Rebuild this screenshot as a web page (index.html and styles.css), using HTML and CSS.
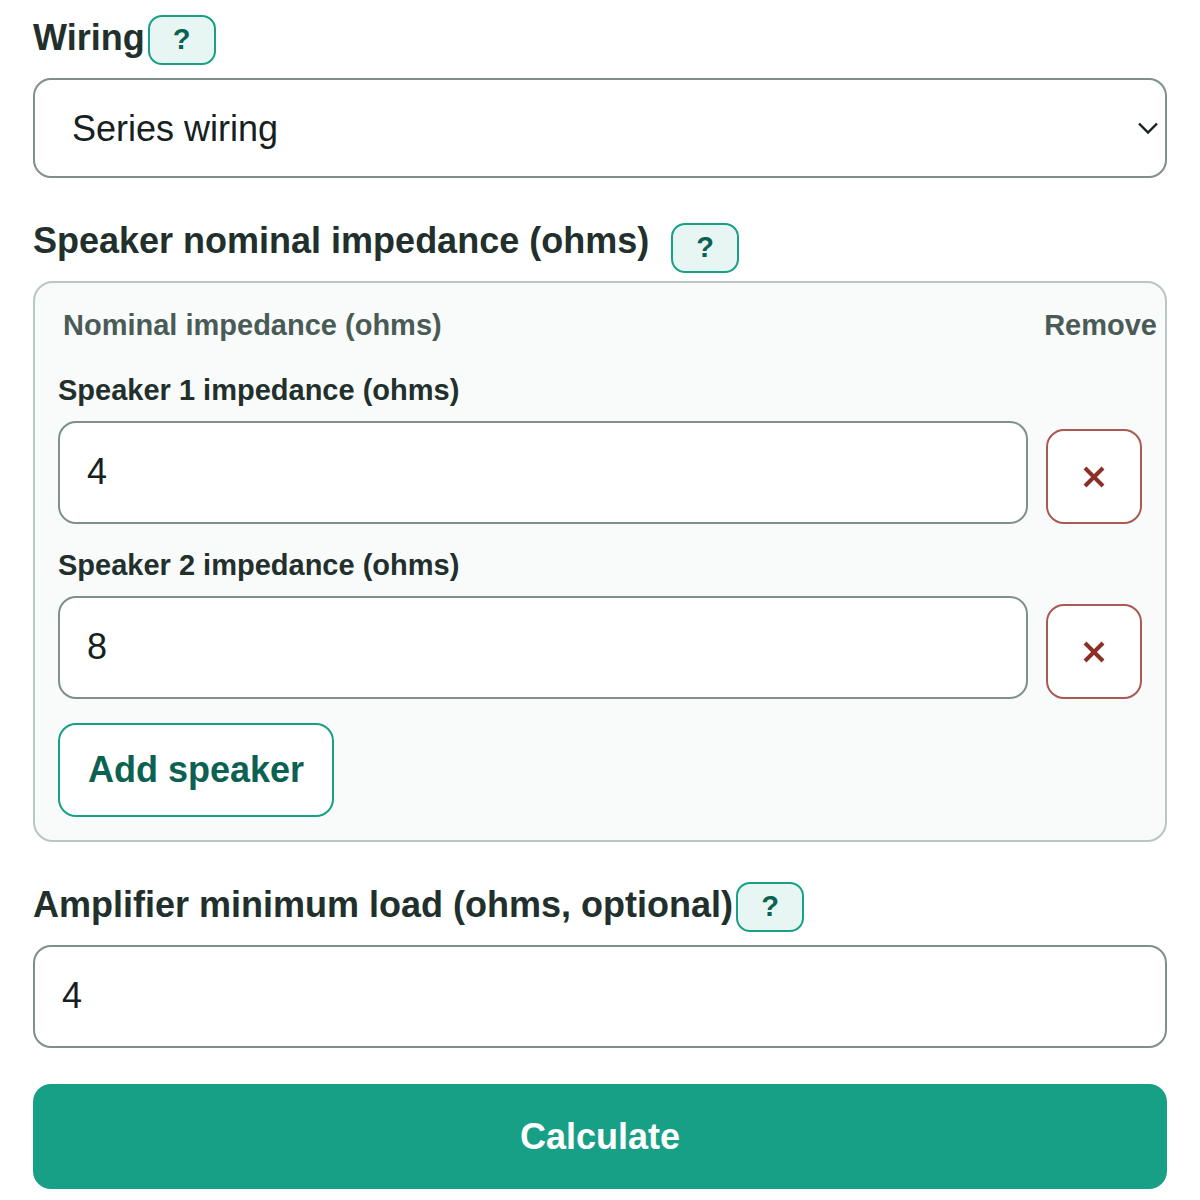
FILE: index.html
```html
<!DOCTYPE html>
<html lang="en">
<head>
  <meta charset="utf-8">
  <meta name="viewport" content="width=device-width, initial-scale=1">
  <title>Speaker impedance calculator</title>
  <link rel="stylesheet" href="styles.css">
</head>
<body>
  <form class="calculator">
    <div class="field">
      <div class="field-head">
        <label class="field-label" for="wiring">Wiring</label>
        <button class="help" type="button" aria-label="Help: wiring">?</button>
      </div>
      <div class="select-wrap">
        <select class="control select" id="wiring">
          <option>Series wiring</option>
          <option>Parallel wiring</option>
        </select>
        <svg class="chevron" viewBox="0 0 22 14" aria-hidden="true"><path d="M2 2.5 11 11.5 20 2.5"/></svg>
      </div>
    </div>

    <div class="field field-group" role="group" aria-labelledby="speakers-title">
      <div class="field-head field-head-spaced">
        <span class="field-label" id="speakers-title">Speaker nominal impedance (ohms)</span>
        <button class="help" type="button" aria-label="Help: speaker impedance">?</button>
      </div>
      <div class="panel">
        <div class="panel-head">
          <span>Nominal impedance (ohms)</span>
          <span>Remove</span>
        </div>
        <div class="speakers">
          <div class="speaker">
            <div class="speaker-field">
              <label class="speaker-label" for="speaker-1">Speaker 1 impedance (ohms)</label>
              <input class="control" id="speaker-1" type="number" value="4">
            </div>
            <button class="remove" type="button" aria-label="Remove speaker 1">
              <svg class="cross" viewBox="0 0 22 22" aria-hidden="true"><path d="M2 2 20 20M20 2 2 20"/></svg>
            </button>
          </div>
          <div class="speaker">
            <div class="speaker-field">
              <label class="speaker-label" for="speaker-2">Speaker 2 impedance (ohms)</label>
              <input class="control" id="speaker-2" type="number" value="8">
            </div>
            <button class="remove" type="button" aria-label="Remove speaker 2">
              <svg class="cross" viewBox="0 0 22 22" aria-hidden="true"><path d="M2 2 20 20M20 2 2 20"/></svg>
            </button>
          </div>
        </div>
        <button class="add" type="button">Add speaker</button>
      </div>
    </div>

    <div class="field">
      <div class="field-head">
        <label class="field-label" for="load">Amplifier minimum load (ohms, optional)</label>
        <button class="help" type="button" aria-label="Help: minimum load">?</button>
      </div>
      <input class="control" id="load" type="number" value="4">
    </div>

    <button class="submit" type="submit">Calculate</button>
  </form>
</body>
</html>
```
FILE: styles.css
```css
* {
  box-sizing: border-box;
}

body {
  margin: 0;
  background: #fff;
  color: #22302d;
  font-family: "Liberation Sans", Arial, sans-serif;
  font-size: 36px;
}

button,
input,
select {
  margin: 0;
  font: inherit;
}

button {
  cursor: pointer;
}

.calculator {
  display: flex;
  flex-direction: column;
  gap: 36px;
  padding: 11px 33px;
}

.field {
  display: flex;
  flex-direction: column;
  gap: 13px;
}

.field-group {
  gap: 8px;
}

.field-head {
  display: flex;
  align-items: flex-start;
  gap: 3px;
  padding-top: 4px;
}

.field-head-spaced {
  gap: 22px;
}

.field-head-spaced .help {
  margin-top: 5px;
}

.field-label {
  line-height: 45px;
  font-weight: 700;
}

.help {
  flex: none;
  width: 68px;
  height: 50px;
  padding: 0 0 2px;
  border: 2px solid #17a086;
  border-radius: 14px;
  background: #e8f6f3;
  color: #0b6152;
  font-size: 29px;
  font-weight: 700;
}

.control {
  width: 100%;
  height: 103px;
  padding: 0 27px 2px;
  border: 2px solid #7f908b;
  border-radius: 18px;
  background: #fff;
  color: #16211f;
  appearance: none;
}

input.control {
  appearance: textfield;
}

.select-wrap {
  position: relative;
}

.select {
  display: block;
  height: 100px;
  padding: 0 37px;
}

.chevron {
  position: absolute;
  top: 50%;
  right: 8px;
  width: 22px;
  height: 14px;
  margin-top: -7px;
  fill: none;
  stroke: #16211f;
  stroke-width: 2.4;
  pointer-events: none;
}

.panel {
  padding: 23px;
  border: 2px solid #b9c7c3;
  border-radius: 20px;
  background: #f9fbfa;
}

.panel-head {
  display: flex;
  justify-content: space-between;
  margin: 0 -15px 27px 0;
  padding-left: 5px;
  color: #4a5b57;
  font-size: 29px;
  font-weight: 700;
  line-height: 38px;
}

.speakers {
  display: flex;
  flex-direction: column;
  gap: 22px;
  margin-bottom: 24px;
}

.speaker {
  display: flex;
  align-items: flex-end;
  gap: 18px;
}

.speaker-field {
  display: flex;
  flex: 1;
  flex-direction: column;
  gap: 12px;
}

.speaker-label {
  font-size: 29px;
  font-weight: 700;
  line-height: 38px;
}

.remove {
  display: flex;
  flex: none;
  align-items: center;
  justify-content: center;
  width: 96px;
  height: 95px;
  padding: 0;
  border: 2px solid #a95a54;
  border-radius: 18px;
  background: #fff;
  color: #8c2f26;
}

.cross {
  width: 22px;
  height: 22px;
  fill: none;
  stroke: currentColor;
  stroke-width: 4;
}

.add {
  display: block;
  height: 94px;
  padding: 0 28px;
  border: 2px solid #17a086;
  border-radius: 18px;
  background: #fff;
  color: #0b6152;
  font-weight: 700;
}

.submit {
  height: 105px;
  border: 0;
  border-radius: 18px;
  background: #17a086;
  color: #fff;
  font-weight: 700;
}
```
